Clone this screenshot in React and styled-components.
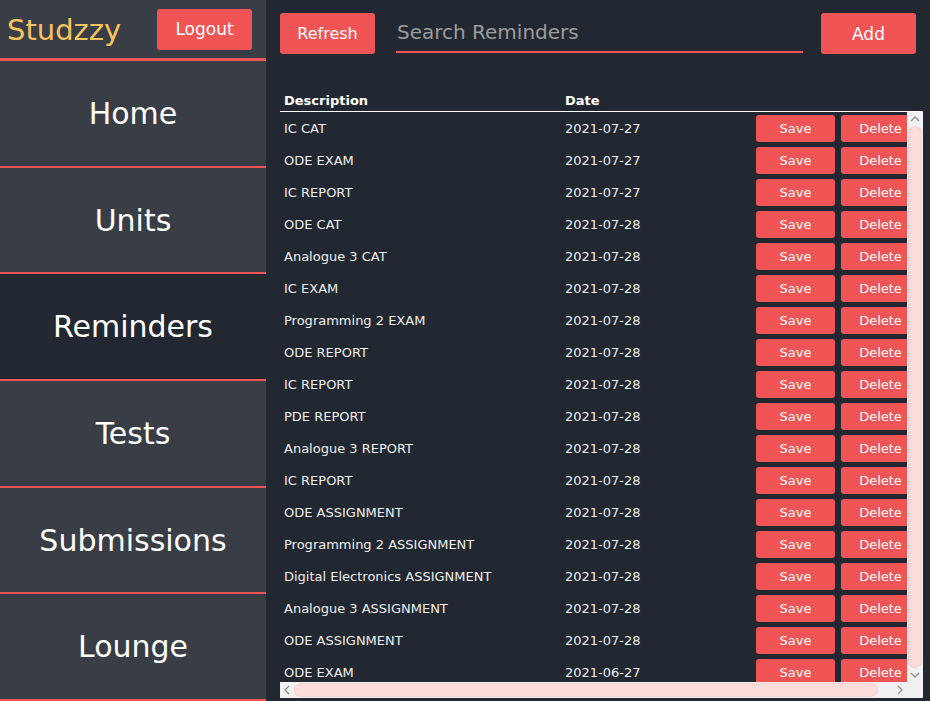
import React from "react";
import styled, { createGlobalStyle } from "styled-components";

const GlobalStyle = createGlobalStyle`
  html, body {
    margin: 0;
    padding: 0;
    height: 100%;
    overflow: hidden;
    background: #222831;
    font-family: "DejaVu Sans", Verdana, sans-serif;
  }
  #root {
    height: 100%;
  }
`;

const Layout = styled.div`
  display: flex;
  height: 100vh;
`;

const Sidebar = styled.aside`
  width: 266px;
  flex-shrink: 0;
  display: flex;
  flex-direction: column;
  background: #393e46;
`;

const SideHeader = styled.div`
  height: 58px;
  display: flex;
  align-items: center;
  justify-content: space-between;
  padding: 0 14px 0 7px;
  border-bottom: 3px solid #f05454;
`;

const Logo = styled.div`
  font-size: 29px;
  color: #f7c35f;
  margin-top: 2px;
`;

const RedButton = styled.button`
  background: #f05454;
  color: #fff;
  border: none;
  border-radius: 3px;
  font-family: "DejaVu Sans", Verdana, sans-serif;
  font-size: ${(p) => p.size || 16}px;
  width: ${(p) => p.w || 95}px;
  height: ${(p) => p.h || 41}px;
  padding: 0;
  flex-shrink: 0;
  cursor: pointer;
`;

const Nav = styled.nav`
  flex: 1;
  display: flex;
  flex-direction: column;
`;

const NavItem = styled.div`
  flex: 1;
  display: flex;
  align-items: center;
  justify-content: center;
  font-size: 30px;
  color: #fff;
  background: ${(p) => (p.active ? "#222831" : "#393e46")};
  border-bottom: 2px solid #f05454;
  cursor: pointer;
`;

const Main = styled.main`
  flex: 1;
  display: flex;
  flex-direction: column;
  padding: 0 7px 3px 14px;
  min-width: 0;
`;

const TopBar = styled.div`
  display: flex;
  align-items: flex-start;
  padding: 13px 7px 0 0;
  height: 41px;
`;

const Search = styled.input`
  flex: 1;
  height: 38px;
  margin: 0 18px 0 21px;
  padding: 0 0 0 1px;
  background: transparent;
  border: none;
  border-bottom: 2px solid #f05454;
  outline: none;
  color: #eee;
  font-family: "DejaVu Sans", Verdana, sans-serif;
  font-size: 20px;

  &::placeholder {
    color: #9c9c9c;
  }
`;

const cols = "281px 191px 85px 87px";

const HeadRow = styled.div`
  margin-top: 35px;
  display: grid;
  grid-template-columns: ${cols};
  height: 22px;
  align-items: center;
  border-bottom: 1px solid #fff;
`;

const HeadCell = styled.div`
  padding-left: 4px;
  font-size: 13px;
  font-weight: bold;
  color: #fff;
`;

/* scroll frame: viewport + drawn scrollbars */
const ScrollFrame = styled.div`
  flex: 1;
  min-height: 0;
  display: grid;
  grid-template-columns: 1fr 16px;
  grid-template-rows: 1fr 16px;
`;

const Viewport = styled.div`
  overflow: hidden;
  min-width: 0;
  min-height: 0;
`;

const Bar = styled.div`
  display: flex;
  flex-direction: ${(p) => (p.vertical ? "column" : "row")};
  background: #f1f1f1;
`;

const ArrowBtn = styled.div`
  flex-shrink: 0;
  width: ${(p) => (p.vertical ? "16px" : "14px")};
  height: ${(p) => (p.vertical ? "14px" : "16px")};
  display: flex;
  align-items: center;
  justify-content: center;
`;

const Track = styled.div`
  flex: 1;
  display: flex;
  flex-direction: ${(p) => (p.vertical ? "column" : "row")};
  padding: ${(p) => (p.vertical ? "0 1px" : "1px 15px 1px 0")};
`;

const Thumb = styled.div`
  flex: 1;
  background: #fddcdc;
  border-radius: 8px;
  box-shadow: inset 0 0 0 1px #f9d0d0;
`;

const Corner = styled.div`
  background: #f1f1f1;
`;

const Row = styled.div`
  display: grid;
  grid-template-columns: ${cols};
  width: 644px;
  height: 32px;
  align-items: center;
`;

const Cell = styled.div`
  padding-left: 4px;
  font-size: 13px;
  color: #eee;
  white-space: nowrap;
`;

const Chevron = ({ dir }) => {
  const pts = {
    up: "1,6 5,2 9,6",
    down: "1,2 5,6 9,2",
    left: "6,1 2,5 6,9",
    right: "2,1 6,5 2,9",
  }[dir];
  const vertical = dir === "up" || dir === "down";
  return (
    <svg width={vertical ? 10 : 8} height={vertical ? 8 : 10} viewBox={vertical ? "0 0 10 8" : "0 0 8 10"}>
      <polyline points={pts} fill="none" stroke="#8f8f8f" strokeWidth="1.3" />
    </svg>
  );
};

const reminders = [
  ["IC CAT", "2021-07-27"],
  ["ODE EXAM", "2021-07-27"],
  ["IC REPORT", "2021-07-27"],
  ["ODE CAT", "2021-07-28"],
  ["Analogue 3 CAT", "2021-07-28"],
  ["IC EXAM", "2021-07-28"],
  ["Programming 2 EXAM", "2021-07-28"],
  ["ODE REPORT", "2021-07-28"],
  ["IC REPORT", "2021-07-28"],
  ["PDE REPORT", "2021-07-28"],
  ["Analogue 3 REPORT", "2021-07-28"],
  ["IC REPORT", "2021-07-28"],
  ["ODE ASSIGNMENT", "2021-07-28"],
  ["Programming 2 ASSIGNMENT", "2021-07-28"],
  ["Digital Electronics ASSIGNMENT", "2021-07-28"],
  ["Analogue 3 ASSIGNMENT", "2021-07-28"],
  ["ODE ASSIGNMENT", "2021-07-28"],
  ["ODE EXAM", "2021-06-27"],
];

const navLinks = ["Home", "Units", "Reminders", "Tests", "Submissions", "Lounge"];

const App = () => {
  return (
    <Layout>
      <GlobalStyle />
      <Sidebar>
        <SideHeader>
          <Logo>Studzzy</Logo>
          <RedButton size={17}>Logout</RedButton>
        </SideHeader>
        <Nav>
          {navLinks.map((link) => (
            <NavItem key={link} active={link === "Reminders"}>
              {link}
            </NavItem>
          ))}
        </Nav>
      </Sidebar>
      <Main>
        <TopBar>
          <RedButton>Refresh</RedButton>
          <Search placeholder="Search Reminders" />
          <RedButton size={17}>Add</RedButton>
        </TopBar>
        <HeadRow>
          <HeadCell>Description</HeadCell>
          <HeadCell>Date</HeadCell>
        </HeadRow>
        <ScrollFrame>
          <Viewport>
            {reminders.map(([desc, date], i) => (
              <Row key={i}>
                <Cell>{desc}</Cell>
                <Cell>{date}</Cell>
                <Cell>
                  <RedButton size={13} w={79} h={27}>Save</RedButton>
                </Cell>
                <Cell>
                  <RedButton size={13} w={79} h={27}>Delete</RedButton>
                </Cell>
              </Row>
            ))}
          </Viewport>
          <Bar vertical>
            <ArrowBtn vertical><Chevron dir="up" /></ArrowBtn>
            <Track vertical><Thumb /></Track>
            <ArrowBtn vertical><Chevron dir="down" /></ArrowBtn>
          </Bar>
          <Bar>
            <ArrowBtn><Chevron dir="left" /></ArrowBtn>
            <Track><Thumb /></Track>
            <ArrowBtn><Chevron dir="right" /></ArrowBtn>
          </Bar>
          <Corner />
        </ScrollFrame>
      </Main>
    </Layout>
  );
};

export default App;
